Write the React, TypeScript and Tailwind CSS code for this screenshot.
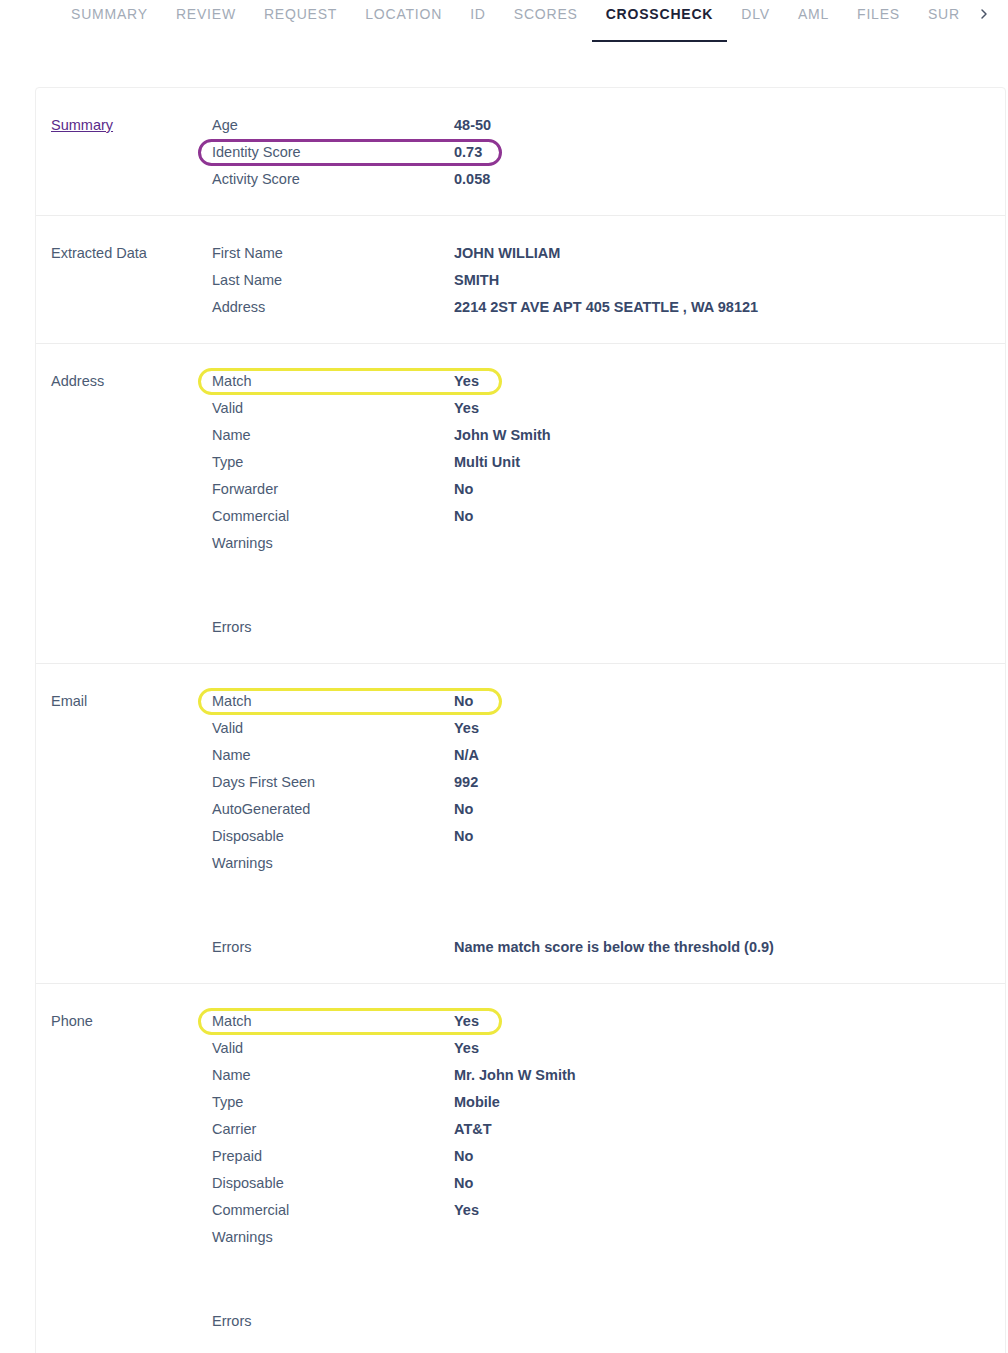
import { FiChevronRight } from "react-icons/fi";

type Field = {
  label: string;
  value?: string;
  ring?: "purple" | "yellow";
  tall?: boolean;
};

type Section = {
  title: string;
  link?: boolean;
  fields: Field[];
};

const tabs = [
  "SUMMARY",
  "REVIEW",
  "REQUEST",
  "LOCATION",
  "ID",
  "SCORES",
  "CROSSCHECK",
  "DLV",
  "AML",
  "FILES",
  "SURVEY",
];

const sections: Section[] = [
  {
    title: "Summary",
    link: true,
    fields: [
      { label: "Age", value: "48-50" },
      { label: "Identity Score", value: "0.73", ring: "purple" },
      { label: "Activity Score", value: "0.058" },
    ],
  },
  {
    title: "Extracted Data",
    fields: [
      { label: "First Name", value: "JOHN WILLIAM" },
      { label: "Last Name", value: "SMITH" },
      { label: "Address", value: "2214 2ST AVE APT 405 SEATTLE , WA 98121" },
    ],
  },
  {
    title: "Address",
    fields: [
      { label: "Match", value: "Yes", ring: "yellow" },
      { label: "Valid", value: "Yes" },
      { label: "Name", value: "John W Smith" },
      { label: "Type", value: "Multi Unit" },
      { label: "Forwarder", value: "No" },
      { label: "Commercial", value: "No" },
      { label: "Warnings", tall: true },
      { label: "Errors" },
    ],
  },
  {
    title: "Email",
    fields: [
      { label: "Match", value: "No", ring: "yellow" },
      { label: "Valid", value: "Yes" },
      { label: "Name", value: "N/A" },
      { label: "Days First Seen", value: "992" },
      { label: "AutoGenerated", value: "No" },
      { label: "Disposable", value: "No" },
      { label: "Warnings", tall: true },
      { label: "Errors", value: "Name match score is below the threshold (0.9)" },
    ],
  },
  {
    title: "Phone",
    fields: [
      { label: "Match", value: "Yes", ring: "yellow" },
      { label: "Valid", value: "Yes" },
      { label: "Name", value: "Mr. John W Smith" },
      { label: "Type", value: "Mobile" },
      { label: "Carrier", value: "AT&T" },
      { label: "Prepaid", value: "No" },
      { label: "Disposable", value: "No" },
      { label: "Commercial", value: "Yes" },
      { label: "Warnings", tall: true },
      { label: "Errors" },
    ],
  },
];

const FieldRow = ({ field }: { field: Field }) => (
  <div className={`relative flex ${field.tall ? "h-[84px]" : "h-[27px]"}`}>
    {field.ring ? (
      <div
        className={`pointer-events-none absolute left-[-14px] top-0 h-[27px] w-[304px] rounded-full border-[3px] ${
          field.ring === "purple" ? "border-[#8e3593]" : "border-[#eee83f]"
        }`}
      />
    ) : null}
    <div className="flex h-[27px] w-[242px] shrink-0 items-center text-[#4b5b74]">
      {field.label}
    </div>
    <div className="flex h-[27px] items-center font-bold text-[#38486a]">
      {field.value}
    </div>
  </div>
);

export default function App() {
  return (
    <div
      className="min-h-screen bg-white text-[14.5px]"
      style={{ fontFamily: '"Liberation Sans", Arial, sans-serif' }}
    >
      <div className="flex h-[42px] items-start pl-[57px]">
        <div className="flex w-[903px] overflow-hidden">
          {tabs.map((t) => {
            const active = t === "CROSSCHECK";
            return (
              <div
                key={t}
                className={`shrink-0 whitespace-nowrap px-[14px] pt-[4px] pb-[16px] text-[14px] leading-[20px] tracking-[0.8px] ${
                  active
                    ? "border-b-2 border-[#1c2238] font-bold text-[#1c2238]"
                    : "border-b-2 border-transparent text-[#a3abb7]"
                }`}
              >
                {t}
              </div>
            );
          })}
        </div>
        <div className="ml-[10px] flex h-[28px] w-[28px] items-center justify-center text-[#4b5568]">
          <FiChevronRight size={16} strokeWidth={2.2} />
        </div>
      </div>

      <div className="pl-[35px] pr-[2px] pt-[45px]">
        <div className="rounded-[4px] border border-[#efefef]">
          {sections.map((s, i) => (
            <div
              key={s.title}
              className={`flex pl-[15px] pt-[24px] pb-[22px] ${
                i > 0 ? "border-t border-[#ededed]" : ""
              }`}
            >
              <div className="flex h-[27px] w-[161px] shrink-0 items-center">
                {s.link ? (
                  <a href="#" className="text-[#5a2a8a] underline">
                    {s.title}
                  </a>
                ) : (
                  <span className="text-[#4b5b74]">{s.title}</span>
                )}
              </div>
              <div className="flex flex-col">
                {s.fields.map((f) => (
                  <FieldRow key={f.label} field={f} />
                ))}
              </div>
            </div>
          ))}
        </div>
      </div>
    </div>
  );
}
